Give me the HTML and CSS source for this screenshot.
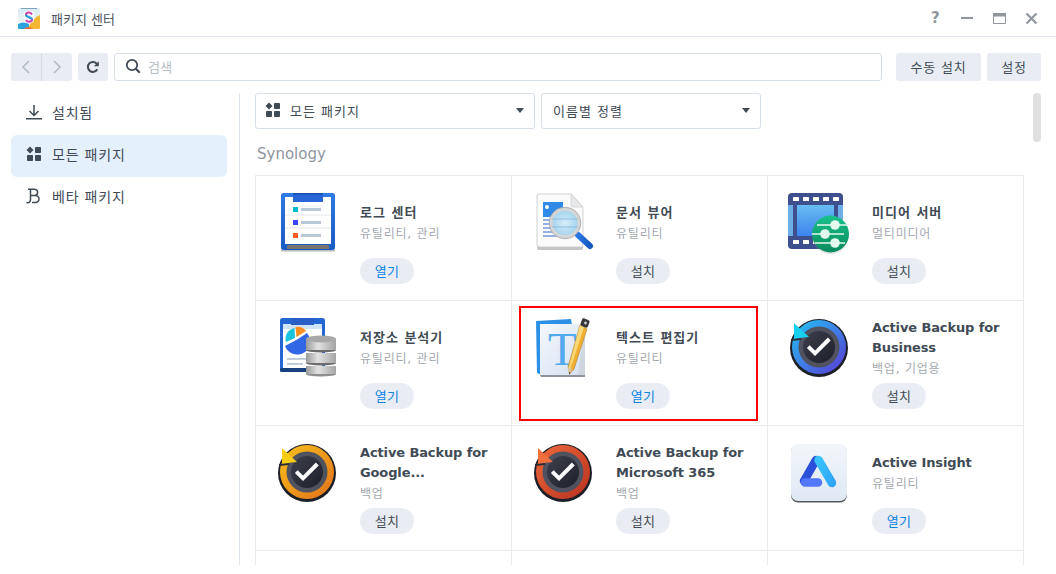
FILE: index.html
```html
<!DOCTYPE html>
<html lang="ko">
<head>
<meta charset="utf-8">
<title>패키지 센터</title>
<link rel="stylesheet" href="styles.css">
</head>
<body>
<div class="window">
  <header class="titlebar">
    <svg class="app-icon" width="22" height="22" viewBox="0 0 22 22">
      <defs><linearGradient id="appbg" x1="0" y1="0" x2="0" y2="1"><stop offset="0" stop-color="#d8ecf5"/><stop offset="1" stop-color="#f4f6ee"/></linearGradient></defs>
      <rect x="0" y="1" width="22" height="21" rx="1.5" fill="url(#appbg)"/>
      <path d="M3 1h16v1H3z" fill="#7fa3b8"/>
      <path d="M0 17q6-3 11 0v5H1.5A1.5 1.5 0 0 1 0 20.500z" fill="#2aa3dc"/>
      <path d="M11 19q5-9 11-11v12.500a1.500 1.500 0 0 1-1.500 1.500H11z" fill="#f2b632"/>
      <path d="M6 22q4-4 9 0z" fill="#f0733a"/>
      <rect x="6" y="4" width="10" height="12" rx="3" fill="#fff" opacity=".75"/>
      <path d="M14 7.500q-1-2-3-2-3 0-3 2.200c0 3 6 2 6 4.800 0 1.500-1.500 2.300-3 2.300q-2.200 0-3-2" fill="none" stroke="#d63fb0" stroke-width="2"/>
      <path d="M8 7.700c0 3 6 2 6 4.800" fill="none" stroke="#1aa7e0" stroke-width="2"/>
    </svg>
    <span class="app-title">패키지 센터</span>
    <div class="win-controls">
      <span class="win-help">?</span>
      <svg width="13" height="13" viewBox="0 0 13 13"><rect x="0" y="5" width="12" height="2" fill="#8f969e"/></svg>
      <svg width="13" height="13" viewBox="0 0 13 13"><path d="M.5 1.500h12v10H.5z" fill="#fff" stroke="#8f969e"/><rect x="0" y="1" width="13" height="3.500" fill="#8f969e"/></svg>
      <svg width="13" height="13" viewBox="0 0 13 13"><path d="M1.500 1.500l10 10M11.500 1.500l-10 10" stroke="#8f969e" stroke-width="2.200" fill="none"/></svg>
    </div>
  </header>

  <div class="toolbar">
    <div class="nav-group">
      <button class="nav-btn"><svg width="10" height="14" viewBox="0 0 10 14"><path d="M8 1L2 7l6 6" fill="none" stroke="#b2bac4" stroke-width="1.500"/></svg></button>
      <button class="nav-btn"><svg width="10" height="14" viewBox="0 0 10 14"><path d="M2 1l6 6-6 6" fill="none" stroke="#b2bac4" stroke-width="1.500"/></svg></button>
    </div>
    <button class="refresh-btn"><svg width="14" height="14" viewBox="0 0 14 14"><path d="M11.300 9.300A5 5 0 1 1 11 4" fill="none" stroke="#414b55" stroke-width="2"/><path d="M12.800 1.200v5h-5z" fill="#414b55"/></svg></button>
    <div class="search">
      <svg width="16" height="16" viewBox="0 0 16 16"><circle cx="7" cy="7" r="5.200" fill="none" stroke="#414b55" stroke-width="1.800"/><path d="M10.800 10.800l4 4" stroke="#414b55" stroke-width="2"/></svg>
      <span class="search-text">검색</span>
    </div>
    <button class="tool-btn install-btn">수동 설치</button>
    <button class="tool-btn settings-btn">설정</button>
  </div>

  <div class="body">
    <nav class="sidebar">
      <a class="side-item">
        <svg width="16" height="16" viewBox="0 0 16 16"><path d="M8 1v10M3.500 7L8 11.500 12.500 7" fill="none" stroke="#414b55" stroke-width="1.500"/><rect y="14" width="16" height="1.500" fill="#414b55"/></svg>
        <span>설치됨</span>
      </a>
      <a class="side-item active">
        <svg width="16" height="16" viewBox="0 0 16 16"><path d="M4 .5L7.500 4 4 7.500.5 4z" fill="#414b55"/><rect x="9" y="1" width="6" height="6" rx=".8" fill="#414b55"/><rect x="1" y="9" width="6" height="6" rx=".8" fill="#414b55"/><rect x="9" y="9" width="6" height="6" rx=".8" fill="#414b55"/></svg>
        <span>모든 패키지</span>
      </a>
      <a class="side-item">
        <svg width="16" height="16" viewBox="0 0 16 16"><path d="M.5 14.500q4 .8 4-3V1.200M2 1.200h6.500a3 3 0 0 1 0 6.300H4.500M8.500 7.500h1a3.500 3.500 0 0 1 0 7H6" fill="none" stroke="#414b55" stroke-width="1.500"/></svg>
        <span>베타 패키지</span>
      </a>
    </nav>

    <main class="content">
      <div class="filters">
        <div class="select select-type">
          <svg width="16" height="16" viewBox="0 0 16 16"><path d="M4 .5L7.500 4 4 7.500.5 4z" fill="#414b55"/><rect x="9" y="1" width="6" height="6" rx=".8" fill="#414b55"/><rect x="1" y="9" width="6" height="6" rx=".8" fill="#414b55"/><rect x="9" y="9" width="6" height="6" rx=".8" fill="#414b55"/></svg>
          <span class="select-label">모든 패키지</span>
          <i class="caret"></i>
        </div>
        <div class="select select-sort">
          <span class="select-label">이름별 정렬</span>
          <i class="caret"></i>
        </div>
      </div>
      <h2 class="section">Synology</h2>

      <div class="grid">
        <article class="cell">
          <svg class="pkg-icon" width="64" height="64" viewBox="0 0 64 64">
            <defs><linearGradient id="lc" x1="0" y1="0" x2="0" y2="1"><stop offset="0" stop-color="#2f7ae6"/><stop offset="1" stop-color="#1b59c4"/></linearGradient></defs>
            <rect x="5" y="3" width="54" height="57" rx="2.500" fill="url(#lc)"/>
            <rect x="11" y="55" width="42" height="4" fill="#77736e"/>
            <rect x="5" y="60" width="54" height="1.500" fill="#9aa0a6" opacity=".7"/>
            <rect x="9" y="7" width="46" height="47" fill="#fff"/>
            <rect x="17" y="3" width="30" height="9" fill="#2865d6"/>
            <rect x="17" y="3" width="30" height="1.500" fill="#1c4fb0"/>
            <path d="M9 25h46M9 38h46" stroke="#e3e6e9"/>
            <rect x="17" y="17" width="5" height="5" fill="#00bcd0"/><rect x="25" y="18" width="20" height="3" fill="#b8c8d6"/>
            <rect x="17" y="30" width="5" height="5" fill="#3b44ff"/><rect x="25" y="31" width="20" height="3" fill="#b8c8d6"/>
            <rect x="17" y="43" width="5" height="5" fill="#ff5a1f"/><rect x="25" y="44" width="20" height="3" fill="#b8c8d6"/>
          </svg>
          <div class="info"><div class="texts"><h3>로그 센터</h3><p>유틸리티, 관리</p></div><button class="pill open">열기</button></div>
        </article>

        <article class="cell">
          <svg class="pkg-icon" width="64" height="64" viewBox="0 0 64 64">
            <defs>
              <linearGradient id="dvh" x1="0" y1="0" x2="1" y2="0"><stop offset="0" stop-color="#2a78e4"/><stop offset="1" stop-color="#1657c0"/></linearGradient>
              <radialGradient id="dvl"><stop offset="0" stop-color="#d8eef9"/><stop offset="1" stop-color="#9fd2ec"/></radialGradient>
            </defs>
            <path d="M7 6h32l12 13v39a2 2 0 0 1-2 2H7a2 2 0 0 1-2-2V8a2 2 0 0 1 2-2z" fill="#c3c5c6"/>
            <path d="M7 4h32l12 13v38a2 2 0 0 1-2 2H7a2 2 0 0 1-2-2V6a2 2 0 0 1 2-2z" fill="#fbfbfb" stroke="#c6c8ca" stroke-width=".8"/>
            <path d="M39 4v11a2 2 0 0 0 2 2h10z" fill="#e6e7e8" stroke="#c6c8ca" stroke-width=".6"/>
            <rect x="11" y="12" width="20" height="15" fill="#2f8ae8"/>
            <circle cx="15" cy="17" r="2" fill="#fff"/>
            <path d="M18 27l7-8 6 8z" fill="#a9cff2"/>
            <path d="M11 30h17M11 34h17M11 38h17M11 42h20M11 46h25" stroke="#2e68c8" stroke-width="1"/>
            <path d="M46 45l12 11" stroke="url(#dvh)" stroke-width="6" stroke-linecap="round"/>
            <circle cx="33" cy="33" r="14" fill="url(#dvl)" stroke="#d4d6d7" stroke-width="3.500"/>
            <circle cx="33" cy="33" r="15.800" fill="none" stroke="#a1a5a8" stroke-width=".8"/>
            <path d="M20 29h26M20 37h26" stroke="#83b6d8" stroke-width=".8"/>
          </svg>
          <div class="info"><div class="texts"><h3>문서 뷰어</h3><p>유틸리티</p></div><button class="pill">설치</button></div>
        </article>

        <article class="cell">
          <svg class="pkg-icon" width="64" height="64" viewBox="0 0 64 64">
            <defs>
              <linearGradient id="msb" x1="0" y1="0" x2="0" y2="1"><stop offset="0" stop-color="#68bdf2"/><stop offset="1" stop-color="#3d83ee"/></linearGradient>
              <linearGradient id="msg" x1="0" y1="0" x2="0" y2="1"><stop offset="0" stop-color="#17c18a"/><stop offset="1" stop-color="#0b8a5c"/></linearGradient>
            </defs>
            <rect x="0" y="3" width="55" height="56" rx="4" fill="#3e4f8e"/>
            <rect x="5" y="7" width="6" height="4" rx=".6" fill="#fff"/><rect x="15" y="7" width="6" height="4" rx=".6" fill="#fff"/><rect x="25" y="7" width="6" height="4" rx=".6" fill="#fff"/><rect x="35" y="7" width="6" height="4" rx=".6" fill="#fff"/><rect x="45" y="7" width="6" height="4" rx=".6" fill="#fff"/>
            <rect x="5" y="50" width="6" height="4" rx=".6" fill="#fff"/><rect x="15" y="50" width="6" height="4" rx=".6" fill="#fff"/><rect x="25" y="50" width="6" height="4" rx=".6" fill="#fff"/>
            <rect x="0" y="15" width="5" height="31" fill="#6eaee6"/>
            <rect x="9" y="15" width="37" height="31" fill="url(#msb)"/>
            <rect x="50" y="15" width="5" height="31" fill="#6eaee6"/>
            <circle cx="42.500" cy="46" r="18" fill="#8a9096" opacity=".25"/>
            <circle cx="42.500" cy="44" r="18.500" fill="url(#msg)"/>
            <path d="M29 35h32M24 44h32M27 53h30" stroke="#e8f8f0" stroke-width="1.300"/>
            <circle cx="47" cy="35" r="4.800" fill="#e4f9ee"/><circle cx="37" cy="44" r="4.800" fill="#e4f9ee"/><circle cx="47" cy="53" r="4.800" fill="#e4f9ee"/>
          </svg>
          <div class="info"><div class="texts"><h3>미디어 서버</h3><p>멀티미디어</p></div><button class="pill">설치</button></div>
        </article>

        <article class="cell">
          <svg class="pkg-icon" width="64" height="64" viewBox="0 0 64 64">
            <defs>
              <linearGradient id="db" x1="0" y1="0" x2="1" y2="0"><stop offset="0" stop-color="#9a9a9a"/><stop offset=".4" stop-color="#e2e2e2"/><stop offset="1" stop-color="#a4a4a4"/></linearGradient>
            </defs>
            <rect x="4" y="3" width="45" height="53" rx="2.500" fill="#2467d4"/>
            <rect x="4" y="53" width="45" height="4" rx="1.500" fill="#17407f"/>
            <rect x="7" y="9" width="39" height="44" fill="#fff"/>
            <rect x="7" y="9" width="39" height="5" fill="#cfe4f8"/>
            <rect x="15" y="3" width="23" height="7" fill="#2a5ec7"/>
            <path d="M22 24l9-6A13 13 0 1 1 9 31z" fill="#3167e6"/>
            <path d="M19 23l-9 4A11 11 0 0 1 18.500 13z" fill="#1bc4de"/>
            <path d="M20.500 22L19.500 12A11 11 0 0 1 30 16z" fill="#fa8e1f"/>
            <rect x="11" y="43" width="19" height="1.800" fill="#b8c8d6"/><rect x="11" y="48" width="16" height="1.800" fill="#b8c8d6"/>
            <rect x="30" y="24" width="30" height="11" fill="url(#db)"/>
            <ellipse cx="45" cy="24" rx="15" ry="3.500" fill="#a8a8a8"/>
            <path d="M30 35a15 2.500 0 0 0 30 0z" fill="#6c6c6c"/>
            <rect x="30" y="38" width="30" height="10" fill="url(#db)"/>
            <path d="M30 48a15 2.500 0 0 0 30 0z" fill="#6c6c6c"/>
            <rect x="30" y="51" width="30" height="8" fill="url(#db)"/>
            <path d="M30 59a15 2.500 0 0 0 30 0z" fill="#8e8e8e"/>
          </svg>
          <div class="info"><div class="texts"><h3>저장소 분석기</h3><p>유틸리티, 관리</p></div><button class="pill open">열기</button></div>
        </article>

        <article class="cell">
          <svg class="pkg-icon" width="64" height="64" viewBox="0 0 64 64">
            <defs>
              <linearGradient id="tep" x1="0" y1="0" x2="1" y2="1"><stop offset="0" stop-color="#f4f8fd"/><stop offset="1" stop-color="#d4dff0"/></linearGradient>
            </defs>
            <path d="M4 6l35-2 1 6-30 50-5-2z" fill="#2d8fe6"/>
            <rect x="8" y="9" width="45" height="52" fill="url(#tep)"/>
            <path d="M8 60h45v2H9z" fill="#8e9399"/>
            <path d="M53 9v51H46z" fill="#c5c9ce" opacity=".5"/>
            <text x="16" y="50" class="t-letter">T</text>
            <path d="M48 10l7 4-13 40-4.500 5-1.500-7z" fill="#f0b033" stroke="#a47218" stroke-width=".5"/>
            <path d="M48 10l4 2-14 43-2 .8z" fill="#f9d878"/>
            <path d="M36 52l4 2-3 6z" fill="#dbc8a0"/>
            <path d="M37.300 57l1.200.8-1.300 2.200z" fill="#333"/>
            <rect x="49" y="4" width="8" height="8" rx="2" transform="rotate(20 53 8)" fill="#38383a"/>
            <circle cx="53.500" cy="8" r="1.400" fill="#cfcfcf"/>
          </svg>
          <div class="info"><div class="texts"><h3>텍스트 편집기</h3><p>유틸리티</p></div><button class="pill open">열기</button></div>
        </article>

        <article class="cell">
          <svg class="pkg-icon" width="64" height="64" viewBox="0 0 64 64">
            <defs><linearGradient id="abb" x1="0" y1="0" x2="1" y2="1"><stop offset="0" stop-color="#22c6f4"/><stop offset="1" stop-color="#5b37d4"/></linearGradient>
            <linearGradient id="abi" x1="0" y1="0" x2="1" y2="1"><stop offset="0" stop-color="#3d404c"/><stop offset="1" stop-color="#1d2029"/></linearGradient></defs>
            <circle cx="31" cy="33" r="29" fill="#1c1f27"/>
            <circle cx="31" cy="32" r="27" fill="url(#abb)"/>
            <circle cx="31" cy="32" r="20.500" fill="#50535f"/>
            <circle cx="31" cy="32" r="16" fill="url(#abi)"/>
            <path d="M3 25l10-1" stroke="#2a2d37" stroke-width="2"/>
            <path d="M6 8v15.500l15-1.500z" fill="#17d0f0"/>
            <path d="M20.300 31.700l6.700 6.600L41.300 24" fill="none" stroke="#fff" stroke-width="4"/>
          </svg>
          <div class="info"><div class="texts"><h3 class="latin">Active Backup for Business</h3><p>백업, 기업용</p></div><button class="pill">설치</button></div>
        </article>

        <article class="cell">
          <svg class="pkg-icon" width="64" height="64" viewBox="0 0 64 64">
            <defs><linearGradient id="abg" x1="0" y1="0" x2="1" y2="1"><stop offset="0" stop-color="#f7c21a"/><stop offset="1" stop-color="#e2701c"/></linearGradient></defs>
            <circle cx="31" cy="33" r="29" fill="#1c1f27"/>
            <circle cx="31" cy="32" r="27" fill="url(#abg)"/>
            <circle cx="31" cy="32" r="20.500" fill="#50535f"/>
            <circle cx="31" cy="32" r="16" fill="url(#abi)"/>
            <path d="M3 25l10-1" stroke="#2a2d37" stroke-width="2"/>
            <path d="M6 8v15.500l15-1.500z" fill="#f8cb15"/>
            <path d="M20.300 31.700l6.700 6.600L41.300 24" fill="none" stroke="#fff" stroke-width="4"/>
          </svg>
          <div class="info"><div class="texts"><h3 class="latin">Active Backup for Google...</h3><p>백업</p></div><button class="pill">설치</button></div>
        </article>

        <article class="cell">
          <svg class="pkg-icon" width="64" height="64" viewBox="0 0 64 64">
            <defs><linearGradient id="abm" x1="0" y1="0" x2="1" y2="1"><stop offset="0" stop-color="#ee6a3c"/><stop offset="1" stop-color="#b9301f"/></linearGradient></defs>
            <circle cx="31" cy="33" r="29" fill="#1c1f27"/>
            <circle cx="31" cy="32" r="27" fill="url(#abm)"/>
            <circle cx="31" cy="32" r="20.500" fill="#50535f"/>
            <circle cx="31" cy="32" r="16" fill="url(#abi)"/>
            <path d="M3 25l10-1" stroke="#2a2d37" stroke-width="2"/>
            <path d="M6 8v15.500l15-1.500z" fill="#f0703c"/>
            <path d="M20.300 31.700l6.700 6.600L41.300 24" fill="none" stroke="#fff" stroke-width="4"/>
          </svg>
          <div class="info"><div class="texts"><h3 class="latin">Active Backup for Microsoft 365</h3><p>백업</p></div><button class="pill">설치</button></div>
        </article>

        <article class="cell">
          <svg class="pkg-icon" width="64" height="64" viewBox="0 0 64 64">
            <defs>
              <linearGradient id="aib" x1="0" y1="0" x2="0" y2="1"><stop offset="0" stop-color="#f2f6fb"/><stop offset="1" stop-color="#dfe8f3"/></linearGradient>
              <linearGradient id="ail" x1="0" y1="0" x2="1" y2="1"><stop offset="0" stop-color="#38c2ff"/><stop offset="1" stop-color="#30a6fa"/></linearGradient>
            </defs>
            <rect x="3" y="5" width="56" height="57.500" rx="7" fill="#55585c"/>
            <rect x="3" y="4" width="56" height="57" rx="7" fill="url(#aib)"/>
            <path d="M28 20L16 41" stroke="#2b4fd8" stroke-width="8.500" stroke-linecap="round"/>
            <path d="M30.500 20L44 43" stroke="url(#ail)" stroke-width="8.500" stroke-linecap="round"/>
            <path d="M17 42.500h13" stroke="#5277fb" stroke-width="8.500" stroke-linecap="round"/>
          </svg>
          <div class="info"><div class="texts"><h3 class="latin">Active Insight</h3><p>유틸리티</p></div><button class="pill open">열기</button></div>
        </article>

        <article class="cell"></article>
        <article class="cell"></article>
        <article class="cell"></article>
      </div>
      <div class="highlight"></div>
    </main>
    <div class="scrollbar"></div>
  </div>
</div>
</body>
</html>
```

FILE: styles.css
```css
* { box-sizing: border-box; }
html, body { margin: 0; height: 100%; background: #fff; overflow: hidden; }
body {
  font-family: "DejaVu Sans", "Noto Sans CJK KR", sans-serif;
  color: #414b55;
  font-size: 13px;
}
button { font: inherit; color: inherit; border: 0; padding: 0; }
.window { width: 1056px; height: 565px; overflow: hidden; }

.titlebar {
  height: 37px;
  display: flex;
  align-items: center;
  padding: 0 18px;
  border-bottom: 1px solid #dfe5ec;
}
.app-icon { margin-right: 11px; }
.app-title { font-size: 13px; letter-spacing: 0; color: #4a545e; }
.win-controls {
  margin-left: auto;
  display: flex;
  align-items: center;
  gap: 19px;
}
.win-help { color: #8f969e; font-size: 15px; width: 10px; margin-right: 1px; font-weight: 700; }

.toolbar {
  height: 28px;
  margin: 16px 15px 0 11px;
  display: flex;
}
.nav-group { display: flex; width: 61px; border-radius: 3px; overflow: hidden; background: #e9edf3; }
.nav-btn { flex: 1; background: transparent; display: flex; align-items: center; justify-content: center; }
.nav-btn + .nav-btn { border-left: 1px solid #d5dbe3; }
.refresh-btn {
  width: 30px; margin-left: 6px; background: #e9edf3; border-radius: 3px;
  display: flex; align-items: center; justify-content: center;
}
.search {
  width: 768px; margin-left: 6px;
  border: 1px solid #d7e0ea; border-radius: 3px;
  display: flex; align-items: center; gap: 7px; padding: 0 0 2px 10px;
}
.search-text { color: #b6bcc3; font-size: 13px; letter-spacing: .4px; }
.tool-btn { background: #e9edf3; border-radius: 3px; font-size: 13px; letter-spacing: .8px; padding-bottom: 2px; }
.install-btn { width: 85px; margin-left: 14px; }
.settings-btn { width: 54px; margin-left: 6px; }

.body { position: relative; display: flex; margin-top: 12px; height: 472px; }
.sidebar {
  width: 228px; margin-left: 11px; display: flex; flex-direction: column;
  flex: none;
}
.side-item {
  width: 216px; height: 42px; display: flex; align-items: center; gap: 10px;
  padding: 0 0 4px 15px; border-radius: 6px; font-size: 14px; letter-spacing: .8px;
}
.side-item.active { background: #e4f0fc; }

.content {
  position: relative;
  width: 785px;
  border-left: 1px solid #dfe5ec;
  padding-left: 15px;
  height: 472px;
  overflow: hidden;
}
.filters { display: flex; gap: 6px; }
.select {
  height: 36px; border: 1px solid #d7e0ea; border-radius: 3px;
  display: flex; align-items: center; padding: 0 10px 2px 9px; gap: 9px;
  font-size: 13px; letter-spacing: 1px;
}
.select-type { width: 280px; }
.select-sort { width: 220px; padding-left: 11px; }
.select-label { flex: 1; }
.caret {
  width: 0; height: 0;
  border-left: 4.500px solid transparent;
  border-right: 4.500px solid transparent;
  border-top: 5px solid #414b55;
}
.section {
  margin: 15px 0 0 2px; height: 31px;
  font-size: 15px; font-weight: 400; line-height: 20px; color: #8f969e;
}
.grid {
  display: grid;
  grid-template-columns: repeat(3, 256px);
  grid-auto-rows: 125px;
  width: 769px;
  border-top: 1px solid #e8ebee;
  border-left: 1px solid #e8ebee;
}
.cell {
  display: flex;
  gap: 20px;
  padding: 14px 0 0 21px;
  border-right: 1px solid #e8ebee;
  border-bottom: 1px solid #e8ebee;
  margin-left: -1px;
}
.pkg-icon { flex: none; }
.info { padding-top: 3px; }
.texts {
  height: 60px; width: 148px; padding-top: 1px;
  display: flex; flex-direction: column; justify-content: center;
}
.texts h3 {
  margin: 0; font-size: 13px; line-height: 20px; font-weight: 700; color: #414b55;
  letter-spacing: 1px;
}
.texts h3.latin { letter-spacing: -.12px; }
.texts p { margin: 1px 0 0; font-size: 12px; line-height: 20px; color: #a3a9b0; letter-spacing: .8px; }
.pill {
  display: block; width: 54px; height: 26px; margin-top: 5px; padding-bottom: 2px;
  background: #e9edf3; border-radius: 13px; font-size: 13px; letter-spacing: .3px;
}
.pill.open { color: #0a83e6; }
.t-letter { font-family: "Liberation Serif", serif; font-size: 47px; fill: #53a9ee; }
.highlight {
  position: absolute;
  left: 279px; top: 213px;
  width: 239px; height: 115px;
  border: 2px solid #f00;
  pointer-events: none;
}
.scrollbar {
  position: absolute; left: 1033px; top: 0;
  width: 8px; height: 49px; border-radius: 4px; background: #e0e0e0;
}
```
